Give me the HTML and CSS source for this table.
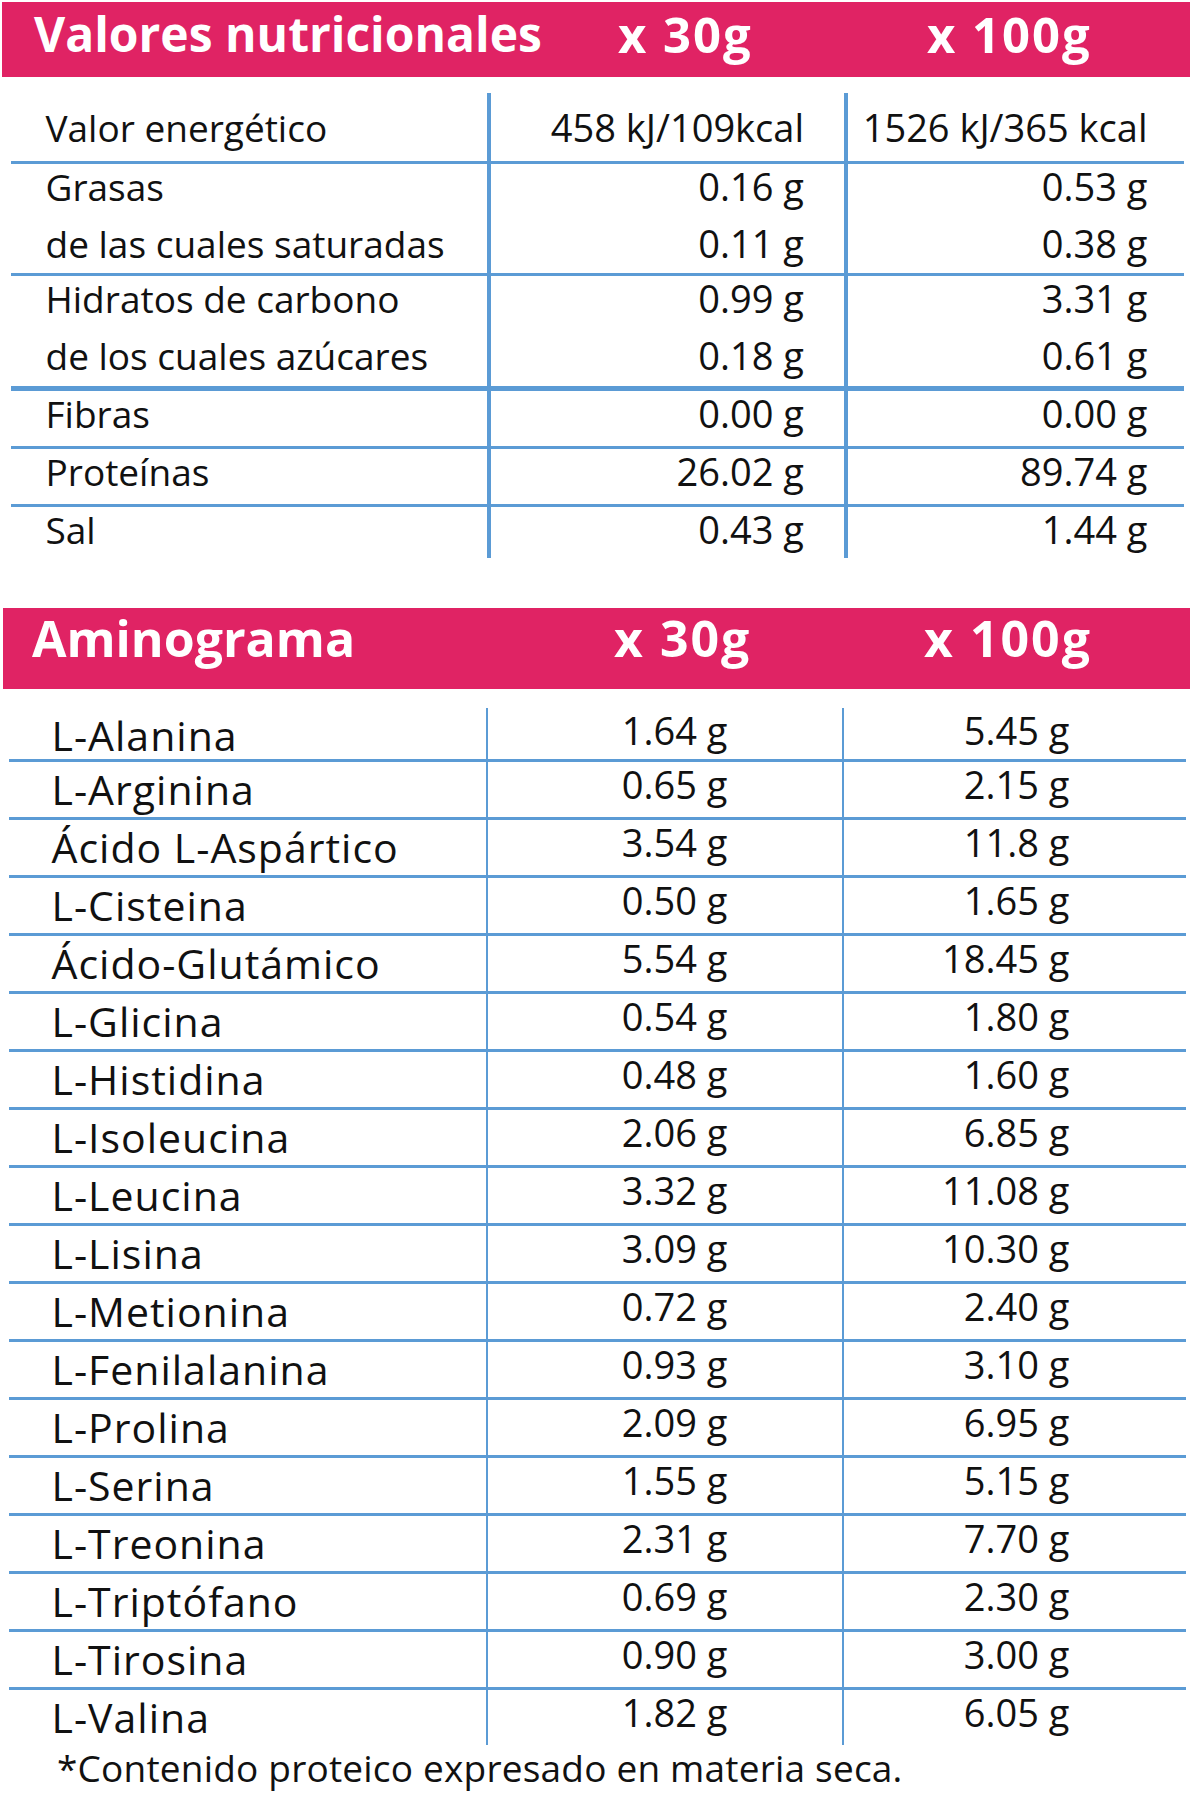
FILE: index.html
```html
<!DOCTYPE html>
<html lang="es">
<head>
<meta charset="utf-8">
<title>Valores nutricionales</title>
<link rel="stylesheet" href="styles.css">
</head>
<body>
<section class="panel">
  <div class="bar bar-nutri">
    <span class="ttl">Valores nutricionales</span><span class="num">x 30g</span><span class="num">x 100g</span>
  </div>
  <div class="t1">
    <div class="r1 energy">
      <div class="c lab"><div class="ln">Valor energético</div></div>
      <div class="c val"><div class="ln">458 kJ/109kcal</div></div>
      <div class="c val end"><div class="ln">1526 kJ/365 kcal</div></div>
    </div>
    <div class="r1 dbl">
      <div class="c lab"><div class="ln">Grasas</div><div class="ln">de las cuales saturadas</div></div>
      <div class="c val"><div class="ln">0.16 g</div><div class="ln">0.11 g</div></div>
      <div class="c val end"><div class="ln">0.53 g</div><div class="ln">0.38 g</div></div>
    </div>
    <div class="r1 dbl thick">
      <div class="c lab"><div class="ln">Hidratos de carbono</div><div class="ln">de los cuales azúcares</div></div>
      <div class="c val"><div class="ln">0.99 g</div><div class="ln">0.18 g</div></div>
      <div class="c val end"><div class="ln">3.31 g</div><div class="ln">0.61 g</div></div>
    </div>
    <div class="r1">
      <div class="c lab"><div class="ln">Fibras</div></div>
      <div class="c val"><div class="ln">0.00 g</div></div>
      <div class="c val end"><div class="ln">0.00 g</div></div>
    </div>
    <div class="r1">
      <div class="c lab"><div class="ln">Proteínas</div></div>
      <div class="c val"><div class="ln">26.02 g</div></div>
      <div class="c val end"><div class="ln">89.74 g</div></div>
    </div>
    <div class="r1 last">
      <div class="c lab"><div class="ln">Sal</div></div>
      <div class="c val"><div class="ln">0.43 g</div></div>
      <div class="c val end"><div class="ln">1.44 g</div></div>
    </div>
  </div>
</section>

<section class="panel amino">
  <div class="bar bar-amino">
    <span class="ttl">Aminograma</span><span class="num">x 30g</span><span class="num">x 100g</span>
  </div>
  <div class="t2">
    <div class="r2 first"><div class="a lab">L-Alanina</div><div class="a val">1.64 g</div><div class="a val end">5.45 g</div></div>
    <div class="r2"><div class="a lab">L-Arginina</div><div class="a val">0.65 g</div><div class="a val end">2.15 g</div></div>
    <div class="r2"><div class="a lab">Ácido L-Aspártico</div><div class="a val">3.54 g</div><div class="a val end">11.8 g</div></div>
    <div class="r2"><div class="a lab">L-Cisteina</div><div class="a val">0.50 g</div><div class="a val end">1.65 g</div></div>
    <div class="r2"><div class="a lab">Ácido-Glutámico</div><div class="a val">5.54 g</div><div class="a val end">18.45 g</div></div>
    <div class="r2"><div class="a lab">L-Glicina</div><div class="a val">0.54 g</div><div class="a val end">1.80 g</div></div>
    <div class="r2"><div class="a lab">L-Histidina</div><div class="a val">0.48 g</div><div class="a val end">1.60 g</div></div>
    <div class="r2"><div class="a lab">L-Isoleucina</div><div class="a val">2.06 g</div><div class="a val end">6.85 g</div></div>
    <div class="r2"><div class="a lab">L-Leucina</div><div class="a val">3.32 g</div><div class="a val end">11.08 g</div></div>
    <div class="r2"><div class="a lab">L-Lisina</div><div class="a val">3.09 g</div><div class="a val end">10.30 g</div></div>
    <div class="r2"><div class="a lab">L-Metionina</div><div class="a val">0.72 g</div><div class="a val end">2.40 g</div></div>
    <div class="r2"><div class="a lab">L-Fenilalanina</div><div class="a val">0.93 g</div><div class="a val end">3.10 g</div></div>
    <div class="r2"><div class="a lab">L-Prolina</div><div class="a val">2.09 g</div><div class="a val end">6.95 g</div></div>
    <div class="r2"><div class="a lab">L-Serina</div><div class="a val">1.55 g</div><div class="a val end">5.15 g</div></div>
    <div class="r2"><div class="a lab">L-Treonina</div><div class="a val">2.31 g</div><div class="a val end">7.70 g</div></div>
    <div class="r2"><div class="a lab">L-Triptófano</div><div class="a val">0.69 g</div><div class="a val end">2.30 g</div></div>
    <div class="r2"><div class="a lab">L-Tirosina</div><div class="a val">0.90 g</div><div class="a val end">3.00 g</div></div>
    <div class="r2 last"><div class="a lab">L-Valina</div><div class="a val">1.82 g</div><div class="a val end">6.05 g</div></div>
  </div>
  <p class="note">*Contenido proteico expresado en materia seca.</p>
</section>
</body>
</html>
```

FILE: styles.css
```css
html, body {
  margin: 0;
  padding: 0;
  background: #ffffff;
}

body {
  width: 1190px;
  font-family: "Open Sans", "Noto Sans", sans-serif;
  color: #111111;
}

/* pink header bars */
.bar {
  display: grid;
  background: #e02364;
  color: #ffffff;
  font-weight: 700;
  white-space: nowrap;
}

.bar .num {
  letter-spacing: 2px;
}

.bar-nutri {
  margin: 2px 0 0 2px;
  height: 75px;
  padding-left: 32px;
  grid-template-columns: 584px 309px auto;
  font-size: 49px;
  line-height: 64.6px;
}

.bar-nutri .ttl {
  font-size: 48px;
}

.bar-amino {
  margin: 50px 0 0 3px;
  height: 81px;
  padding-left: 29px;
  grid-template-columns: 582px 310px auto;
  font-size: 50px;
  line-height: 61.8px;
}

/* table 1 */
.t1 {
  margin: 16px 0 0 11px;
  width: 1173px;
}

.r1 {
  display: grid;
  grid-template-columns: 479.5px 357px 1fr;
  border-bottom: 3px solid #5b9bd5;
}

.r1.thick {
  border-bottom-width: 5px;
}

.r1.last {
  border-bottom: 0;
}

.c {
  border-right: 4px solid #5b9bd5;
}

.c.end {
  border-right: 0;
}

.c.lab {
  padding-left: 34.5px;
  font-size: 37px;
}

.c.val {
  text-align: right;
  padding-right: 39.5px;
  font-size: 38px;
}

.c.val.end {
  padding-right: 36.5px;
}

.ln {
  height: 55px;
  white-space: nowrap;
}

.lab .ln {
  line-height: 45.3px;
}

.val .ln {
  line-height: 44.5px;
}

.dbl .ln:first-child {
  height: 57px;
}

.dbl .ln:last-child {
  height: 52px;
}

.dbl.thick .ln:last-child {
  height: 53px;
}

.energy .ln {
  height: 68px;
}

.energy .lab .ln {
  line-height: 69.3px;
}

.energy .val .ln {
  line-height: 68.5px;
}

.last .ln {
  height: 51px;
}

/* table 2 */
.t2 {
  margin: 19px 0 0 9px;
  width: 1177px;
}

.r2 {
  display: grid;
  grid-template-columns: 479px 356px 1fr;
  height: 55px;
  border-bottom: 3px solid #5b9bd5;
}

.r2.first {
  height: 51px;
}

.r2.last {
  height: 43.5px;
  border-bottom: 0;
}

.a {
  border-right: 2px solid #5b9bd5;
  white-space: nowrap;
}

.a.end {
  border-right: 0;
}

.a.lab {
  padding-left: 42.5px;
  font-size: 41px;
  letter-spacing: 1px;
  line-height: 55.4px;
}

.a.val {
  text-align: right;
  padding-right: 114.5px;
  font-size: 38px;
  line-height: 44.5px;
}

.a.val.end {
  padding-right: 116.5px;
}

.note {
  margin: 0;
  padding-left: 57px;
  font-size: 37px;
  line-height: 68px;
  letter-spacing: 0.2px;
  white-space: nowrap;
}
```
